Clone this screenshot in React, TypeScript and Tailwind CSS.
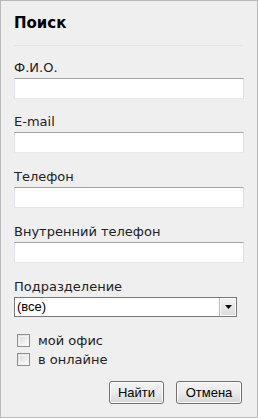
import React from "react";

const labelCls = "block text-[13px] leading-[16px] text-[#222]";
const inputCls =
  "mt-[2px] block h-[21px] w-[230px] bg-white border border-t-[#a3a3a3] border-l-[#e2e3ea] border-r-[#dbdfe6] border-b-[#e3e9ef] outline-none";

function Field({ label, mt }: { label: string; mt: string }) {
  return (
    <div className={mt}>
      <div className={labelCls}>{label}</div>
      <input type="text" className={inputCls} />
    </div>
  );
}

function Checkbox({ label }: { label: string }) {
  return (
    <div className="flex items-center h-[19px]">
      <span className="ml-[3px] w-[13px] h-[13px] border border-[#8e8f8f] bg-gradient-to-br from-[#dcdcdc] to-[#fbfbfb] p-px">
        <span className="block w-full h-full border border-[#f4f4f4] bg-gradient-to-br from-[#dedede] to-[#f9f9f9]" />
      </span>
      <span className="ml-[8px] text-[13px] leading-[16px] text-[#222]">{label}</span>
    </div>
  );
}

function Btn({ children, w }: { children: React.ReactNode; w: string }) {
  return (
    <button
      className={`${w} h-[23px] rounded-[3px] border border-[#707070] bg-gradient-to-b from-[#f2f2f2] via-[#ebebeb] to-[#d6d6d6] text-[13px] text-black shadow-[inset_0_0_0_1px_#fcfcfc]`}
      style={{ fontFamily: "'Liberation Sans', Arial, sans-serif" }}
    >
      {children}
    </button>
  );
}

export default function App() {
  return (
    <div
      className="w-[258px] h-[418px] border border-[#b8b8b8] bg-[#efefef] px-[13px] pt-[13px]"
      style={{ fontFamily: "'DejaVu Sans', Verdana, sans-serif" }}
    >
      <div className="text-[15px] leading-[18px] font-bold text-black">Поиск</div>
      <div className="mt-[13px] h-px w-[229px] bg-[#e3e3e3]" />
      <Field label="Ф.И.О." mt="mt-[14px]" />
      <Field label="E-mail" mt="mt-[15px]" />
      <Field label="Телефон" mt="mt-[16px]" />
      <Field label="Внутренний телефон" mt="mt-[16px]" />
      <div className="mt-[16px]">
        <div className={labelCls}>Подразделение</div>
        <div className="mt-[2px] flex h-[20px] w-[223px] border border-[#7a7a7a] bg-white">
          <div
            className="flex-1 pl-[2px] text-[13px] leading-[18px] text-black"
            style={{ fontFamily: "'Liberation Sans', Arial, sans-serif" }}
          >
            (все)
          </div>
          <div className="flex w-[17px] items-center justify-center border-l border-[#b9b9b9] bg-gradient-to-b from-[#f3f3f3] to-[#dcdcdc] shadow-[inset_0_0_0_1px_#fafafa]">
            <svg width="7" height="4" viewBox="0 0 7 4">
              <path d="M0 0H7L3.5 4Z" fill="#000" />
            </svg>
          </div>
        </div>
      </div>
      <div className="mt-[14px]">
        <Checkbox label="мой офис" />
        <Checkbox label="в онлайне" />
      </div>
      <div className="mt-[12px] flex justify-end gap-[12px] pr-[2px]">
        <Btn w="w-[55px]">Найти</Btn>
        <Btn w="w-[66px]">Отмена</Btn>
      </div>
    </div>
  );
}
